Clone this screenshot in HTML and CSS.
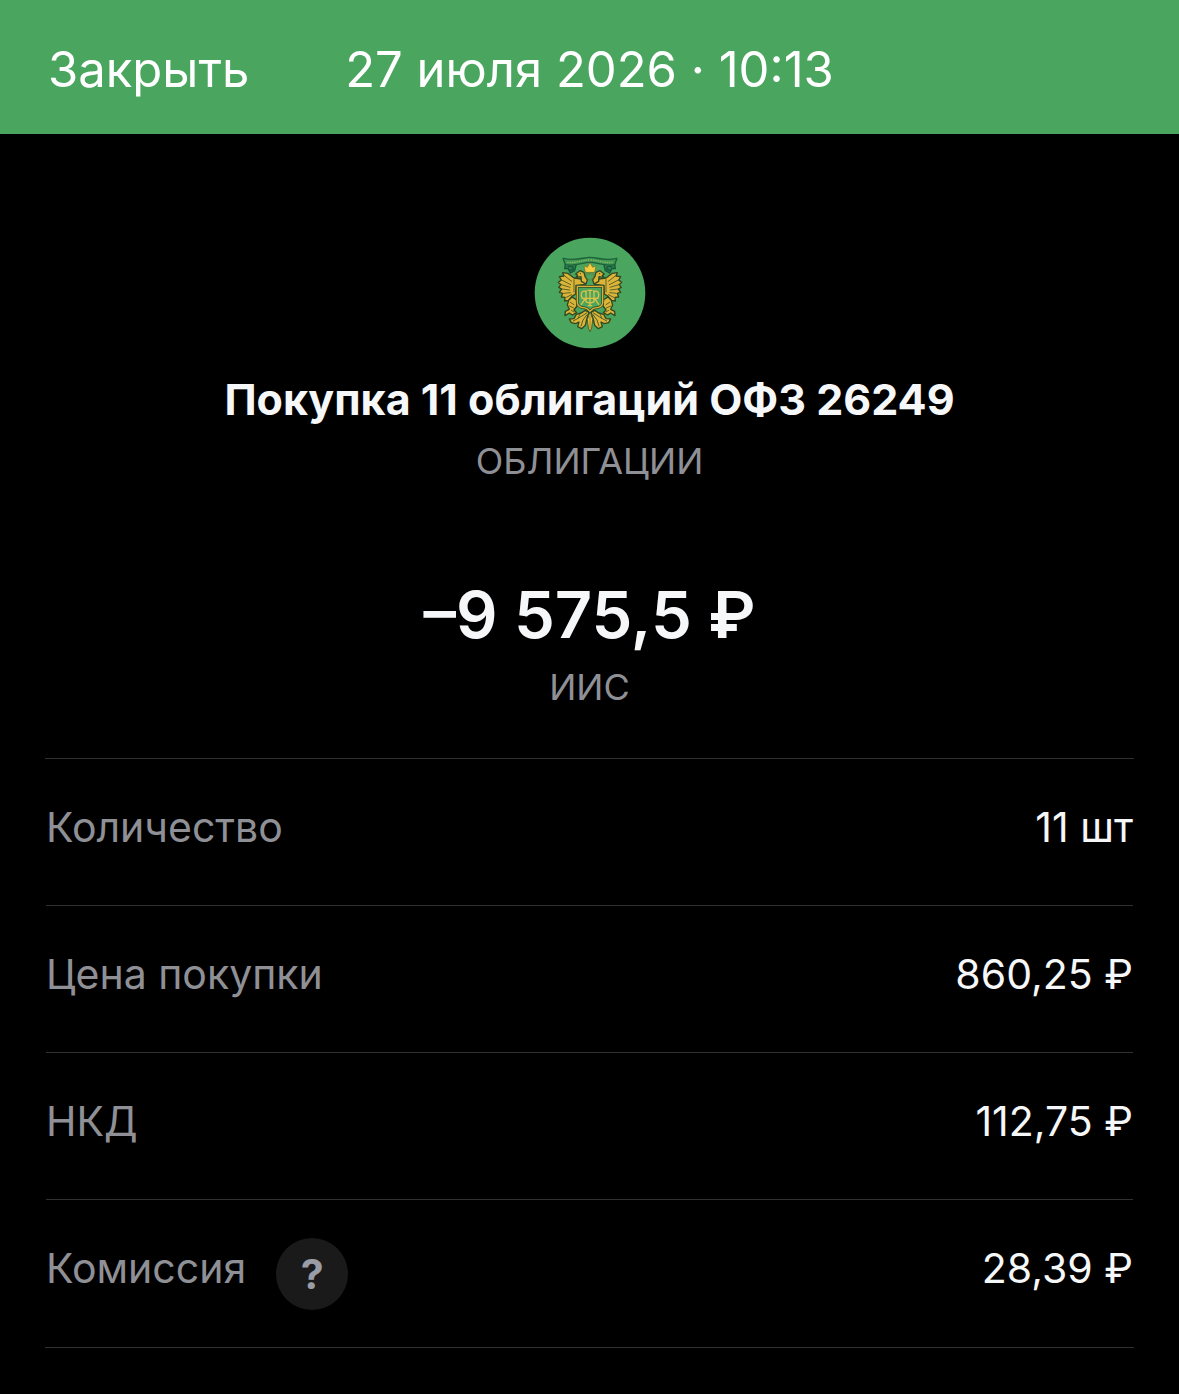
FILE: index.html
```html
<!DOCTYPE html>
<html lang="ru">
<head>
<meta charset="utf-8">
<meta name="viewport" content="width=device-width, initial-scale=1">
<title>Покупка облигаций</title>
<link rel="stylesheet" href="styles.css">
</head>
<body>
<header class="bar">
  <button class="close" type="button">Закрыть</button>
  <time class="date" datetime="2026-07-27T10:13">27 июля 2026 · 10:13</time>
</header>
<main class="content">
  <section class="summary">
    <svg class="emblem" viewBox="0 0 336 336" aria-hidden="true">
      <defs>
        <g id="half" stroke-linejoin="round" stroke-linecap="round">
          <!-- wing -->
          <path d="M165 143 L132 138 L113 124 L98 122 L102 132 L88 134 L94 144 L85 151 L93 158 L86 166 L95 171 L88 181 L98 184 L94 195 L105 196 L104 207 L116 205 L126 193 L137 186 L138 160 L166 157 Z" fill="#dcb43a" stroke="#33481f" stroke-width="4"/>
          <path d="M103 131 L125 148 M95 144 L122 158 M94 158 L120 166 M96 171 L119 174 M101 184 L121 182 M109 196 L125 188 M132 143 V180" fill="none" stroke="#5e6424" stroke-width="3"/>
          <!-- head and neck -->
          <path d="M172 144 L165 133 L162 121 L150 116 L137 126 L143 130 L138 136 L153 134 L154 148 L168 156 Z" fill="#dcb43a" stroke="#33481f" stroke-width="4"/>
          <circle cx="151" cy="125" r="2" fill="#33481f"/>
          <!-- leg and claw -->
          <path d="M126 195 L139 203 L141 222 L132 234 L140 242 L127 249 L118 243 L105 251 L106 238 L118 232 L112 219 L116 205 Z" fill="#dcb43a" stroke="#33481f" stroke-width="4"/>
          <path d="M121 211 L132 218 M118 222 L131 228 M124 235 L132 240" fill="none" stroke="#5e6424" stroke-width="3"/>
          <!-- tail feathers -->
          <path d="M166 235 L154 243 L139 247 L132 260 L118 261 L124 272 L137 275 L147 270 L143 284 L155 290 L166 280 L170 262 L177 241 Z" fill="#dcb43a" stroke="#33481f" stroke-width="4"/>
          <path d="M170 243 L151 255 L130 267 M171 248 L159 264 L153 282 M150 246 L144 259" fill="none" stroke="#4c602a" stroke-width="3"/>
          <!-- ribbon -->
          <path d="M107 92 L104 110 L114 109 L121 123 L134 116 L138 100" fill="#2c7f4c" stroke="#17583a" stroke-width="4"/>
          <path d="M115 104 C122 100 132 104 129 112 L121 115" fill="none" stroke="#17583a" stroke-width="4"/>
          <path d="M180 76 C158 76 140 88 99 79 L106 98 C138 104 158 91 180 91" fill="#3f9857" stroke="#1c6238" stroke-width="4"/>
          <path d="M113 91 C138 94 158 84 178 84" fill="none" stroke="#8fb858" stroke-width="4" stroke-dasharray="1 6"/>
        </g>
      </defs>
      <circle class="disc" cx="168" cy="168" r="166"/>
      <g transform="translate(-12 -15)">
        <use href="#half"/>
        <use href="#half" transform="matrix(-1 0 0 1 360 0)"/>
        <g stroke-linejoin="round" stroke-linecap="round">
          <!-- crown -->
          <path d="M166 120 L162 101 L172 106 L180 92 L188 106 L198 101 L194 120 Z" fill="#f5cc40" stroke="#75702a" stroke-width="2"/>
          <path d="M169 126 L191 126 L190 138 L180 145 L170 138 Z" fill="#4aa55e" stroke="#75702a" stroke-width="2"/>
          <!-- central tail feather -->
          <path d="M180 239 L172 263 L175 288 L180 299 L185 288 L188 263 Z" fill="#edc33e" stroke="#4c602a" stroke-width="3"/>
          <path d="M180 252 V289" fill="none" stroke="#66652a" stroke-width="2"/>
          <!-- shield -->
          <path d="M142 163 H218 V211 Q218 223 205 226 L190 229 L180 238 L170 229 L155 226 Q142 223 142 211 Z" fill="#4aa55e" stroke="#33481f" stroke-width="8"/>
          <path d="M142 163 H218 V211 Q218 223 205 226 L190 229 L180 238 L170 229 L155 226 Q142 223 142 211 Z" fill="none" stroke="#d9b13a" stroke-width="4"/>
          <!-- monogram -->
          <g fill="none" stroke="#dfc245" stroke-width="4">
            <path d="M180 175 V221 M174 175 H186 M175 221 H185 M168 176 V209 Q180 217 192 209 V176 M156 199 H204"/>
            <path d="M168 179 C149 170 149 205 168 202 M192 179 C211 170 211 205 192 202 M164 203 L154 217 M196 203 L206 217"/>
          </g>
        </g>
      </g>
    </svg>
    <h1 class="title">Покупка 11 облигаций ОФЗ 26249</h1>
    <p class="caption">ОБЛИГАЦИИ</p>
    <p class="amount">–9 575,5 ₽</p>
    <p class="caption">ИИС</p>
  </section>
  <dl class="details">
    <div class="row"><dt>Количество</dt><dd>11 шт</dd></div>
    <div class="row"><dt>Цена покупки</dt><dd>860,25 ₽</dd></div>
    <div class="row"><dt>НКД</dt><dd>112,75 ₽</dd></div>
    <div class="row"><dt>Комиссия <button class="help" type="button">?</button></dt><dd>28,39 ₽</dd></div>
  </dl>
</main>
</body>
</html>
```
FILE: styles.css
```css
* { box-sizing: border-box; }

body {
  margin: 0;
  background: #000;
  color: #f6f7f8;
  font-family: Inter, "Liberation Sans", sans-serif;
}

button {
  border: 0;
  padding: 0;
  font: inherit;
  color: inherit;
  cursor: pointer;
}

.bar {
  display: grid;
  grid-template-columns: 1fr auto 1fr;
  align-items: center;
  padding: 40px 48px 34px;
  background: #4aa55e;
  color: #fff;
  font-size: 49px;
  line-height: 60px;
}

.close {
  justify-self: start;
  background: none;
}

.content { padding: 103px 45px 46px; }

.summary {
  display: flex;
  flex-direction: column;
  align-items: center;
  padding-bottom: 49px;
  text-align: center;
}

.emblem {
  width: 112px;
  height: 112px;
}

.disc { fill: #4aa55e; }

.title {
  margin: 22px 0 12px;
  font-size: 43px;
  line-height: 56px;
  font-weight: 700;
}

.caption {
  margin: 0;
  color: #8f9096;
  font-size: 36px;
  line-height: 44px;
}

.amount {
  margin: 92px 0 10px;
  font-size: 65px;
  line-height: 80px;
  font-weight: 600;
}

.details {
  margin: 0;
  padding: 0 1px;
  border-top: 1px solid #303032;
  border-bottom: 1px solid #303032;
}

.row {
  display: flex;
  justify-content: space-between;
  align-items: flex-start;
  padding: 38px 0 36px;
  font-size: 41px;
  line-height: 60px;
}

.row + .row { border-top: 1px solid #303032; }

.row:last-child { padding-bottom: 37px; }

dt {
  display: flex;
  align-items: flex-start;
  gap: 30px;
  min-height: 72px;
  color: #8f9096;
}

dd { margin: 0; }

.help {
  width: 72px;
  height: 72px;
  border-radius: 50%;
  background: #1a1a1b;
  color: #9a9ca6;
  font-weight: 700;
}
```
